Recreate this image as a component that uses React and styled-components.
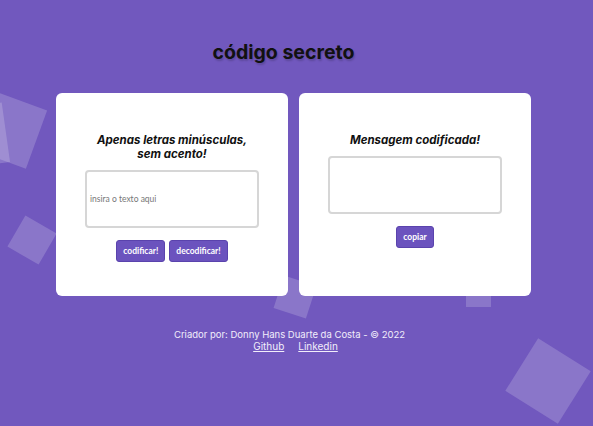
import React from "react";
import styled, { createGlobalStyle } from "styled-components";

const Global = createGlobalStyle`
  html, body { margin: 0; padding: 0; }
  body {
    background: #7158be;
    font-family: "Inter", sans-serif;
    overflow: hidden;
  }
`;

const Page = styled.div`
  position: relative;
  width: 593px;
  height: 426px;
  overflow: hidden;
  display: flex;
  flex-direction: column;
  align-items: center;
`;

const Square = styled.div`
  position: absolute;
  background: rgba(255, 255, 255, 0.18);
  z-index: 0;
`;

const Title = styled.h1`
  position: relative;
  z-index: 1;
  margin: 38px 26px 0 0;
  font-family: "Inter", sans-serif;
  font-weight: 700;
  font-size: 19.5px;
  line-height: 28px;
  color: #111;
  text-shadow: 1px 2px 2px rgba(0, 0, 0, 0.18);
`;

const Cards = styled.main`
  position: relative;
  z-index: 1;
  display: flex;
  gap: 11px;
  margin-top: 27px;
  margin-right: 6px;
`;

const Card = styled.section`
  width: 232px;
  height: 203px;
  box-sizing: border-box;
  background: #fff;
  border-radius: 6px;
  display: flex;
  flex-direction: column;
  align-items: center;
  padding-top: ${(p) => p.$pt}px;
`;

const Heading = styled.h2`
  margin: 0;
  font-family: "Inter", sans-serif;
  font-style: italic;
  font-weight: 700;
  font-size: 11.5px;
  line-height: 14px;
  text-align: center;
  color: #111;
`;

const Field = styled.textarea`
  box-sizing: border-box;
  width: 174px;
  height: 58px;
  margin-top: ${(p) => p.$mt}px;
  border: 2px solid #d6d6d6;
  border-radius: 4px;
  resize: none;
  outline: none;
  padding: ${(p) => (p.$center ? "22px 3px 0" : "4px")};
  font-family: "Lato", sans-serif;
  font-size: 8.5px;
  color: #555;
  &::placeholder { color: #777; }
`;

const Buttons = styled.div`
  display: flex;
  gap: 4px;
  margin-top: ${(p) => p.$mt}px;
`;

const Button = styled.button`
  height: 22px;
  padding: 0 ${(p) => p.$px}px;
  background: #6b53be;
  border: 1.5px solid #5a43ad;
  border-radius: 3px;
  color: #fff;
  font-family: "Lato", sans-serif;
  font-weight: 700;
  font-size: 8.5px;
  cursor: pointer;
`;

const Footer = styled.footer`
  position: relative;
  z-index: 1;
  margin-top: 33px;
  margin-right: 14px;
  text-align: center;
  color: #f2eefb;
  font-family: "Inter", sans-serif;
  font-size: 9.5px;
  line-height: 12px;
`;

const Links = styled.div`
  display: flex;
  justify-content: center;
  gap: 14px;
  margin-left: 12px;
  font-size: 10px;
  line-height: 11px;
`;

const Link = styled.a`
  color: #f2eefb;
  text-decoration: underline;
`;

export default function App() {
  return (
    <>
      <Global />
      <Page>
        <Square style={{ left: -12, top: 100, width: 50, height: 62, transform: "rotate(20deg)" }} />
        <Square style={{ left: -20, top: 104, width: 26, height: 60, transform: "rotate(-8deg)" }} />
        <Square style={{ left: 14, top: 222, width: 36, height: 36, transform: "rotate(30deg)" }} />
        <Square style={{ left: 278, top: 280, width: 34, height: 34, transform: "rotate(18deg)" }} />
        <Square style={{ left: 466, top: 285, width: 25, height: 22 }} />
        <Square style={{ left: 517, top: 350, width: 62, height: 62, transform: "rotate(32deg)" }} />
        <Title>código secreto</Title>
        <Cards>
          <Card $pt={40}>
            <Heading>
              Apenas letras minúsculas,
              <br />
              sem acento!
            </Heading>
            <Field $mt={9} $center placeholder="insira o texto aqui" />
            <Buttons $mt={12}>
              <Button $px={6}>codificar!</Button>
              <Button $px={6}>decodificar!</Button>
            </Buttons>
          </Card>
          <Card $pt={40}>
            <Heading>Mensagem codificada!</Heading>
            <Field $mt={9} />
            <Buttons $mt={12}>
              <Button $px={6}>copiar</Button>
            </Buttons>
          </Card>
        </Cards>
        <Footer>
          <div>Criador por: Donny Hans Duarte da Costa - © 2022</div>
          <Links>
            <Link href="#">Github</Link>
            <Link href="#">Linkedin</Link>
          </Links>
        </Footer>
      </Page>
    </>
  );
}
